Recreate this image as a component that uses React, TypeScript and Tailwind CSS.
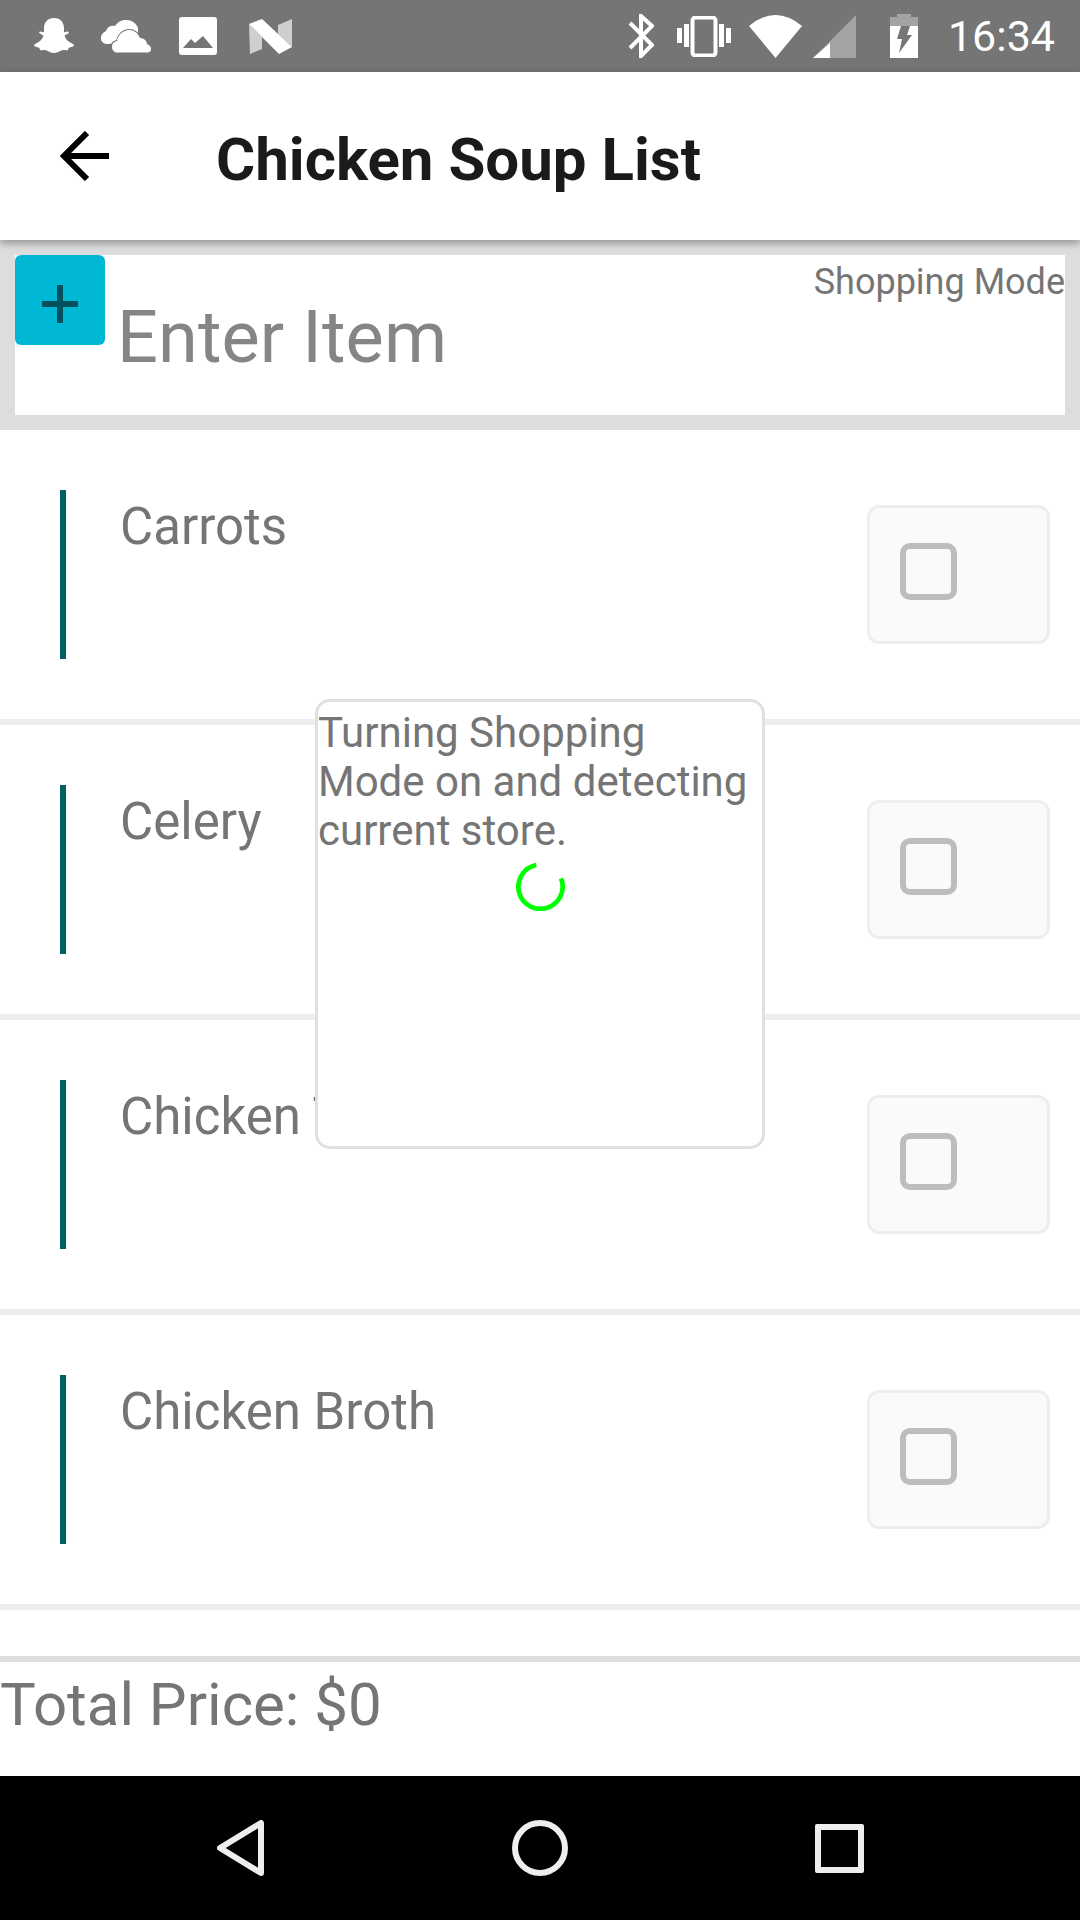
const items = ['Carrots', 'Celery', 'Chicken T', 'Chicken Broth']

function Snapchat() {
  return (
    <svg width="42" height="38" viewBox="0 0 42 40" fill="white" preserveAspectRatio="none">
      <path d="M21 1c6.500 0 10 4.800 10 10.500v4.500l3.800-.8c1.200 0 1.400 1.600.4 2.200l-3.700 2c.8 3.600 3.800 6.700 7.600 8.600 2.500 1.300 2.300 2.800 0 3.400l-3.300.9-1 2.600-4.800-.2c-3 .4-5.600 3.300-9 3.300s-6-2.900-9-3.300l-4.800.2-1-2.600-3.300-.9c-2.300-.6-2.500-2.100 0-3.400 3.800-1.900 6.800-5 7.600-8.600l-3.700-2c-1-.6-.8-2.200.4-2.200l3.800.8v-4.500C11 5.800 14.500 1 21 1z" />
    </svg>
  )
}

function Clouds() {
  return (
    <svg width="50" height="33" viewBox="0 0 50 33" fill="white">
      <path d="M7 24C3 24 0 22 0 18c0-4 3-6 5-7 1-4 5-6 9-5 3-4 6-6 11-6 6 0 10 3 12 8v12z" />
      <path
        d="M16 32.500c-3 0-5-2.500-5-6 0-3 2-5 5-5.500 1-6 6-11 12-11 5 0 9 3 11 8 4 0 7 3 7 6 3 1 4 3 4 5 0 2-1 3.500-4 3.500z"
        stroke="#757575"
        strokeWidth="2"
        paintOrder="stroke"
      />
    </svg>
  )
}

function ImageIcon() {
  return (
    <svg width="38" height="38" viewBox="0 0 38 38">
      <rect width="38" height="38" rx="3" fill="white" />
      <path d="M4 31l8-9 4 4 8-7 10 12z" fill="#757575" />
    </svg>
  )
}

function Nougat() {
  return (
    <svg width="43" height="35" viewBox="0 0 43 35">
      <path d="M0 5l1 30 12-5V18z" fill="#cfcfcf" />
      <path d="M29 6l14-6v28L29 15z" fill="#cfcfcf" />
      <path d="M0 5l13-5 30 28-13 7z" fill="white" />
    </svg>
  )
}

function Bluetooth() {
  return (
    <svg width="26" height="44" viewBox="0 0 26 44" fill="none" stroke="white" strokeWidth="4">
      <path d="M2 9l22 22-11 11V2l11 10L2 34" />
    </svg>
  )
}

function Vibrate() {
  return (
    <svg width="54" height="41" viewBox="0 0 54 41" fill="white">
      <rect x="0" y="12" width="5" height="15" />
      <rect x="7" y="8" width="5" height="23" />
      <rect x="42" y="8" width="5" height="23" />
      <rect x="49" y="12" width="5" height="15" />
      <rect x="15.500" y="1.500" width="23" height="38" rx="3" fill="none" stroke="white" strokeWidth="4" />
    </svg>
  )
}

function Wifi() {
  return (
    <svg width="53" height="43" viewBox="0 0 53 43" fill="white">
      <path d="M26.500 43L0 11Q26.500-11 53 11z" />
    </svg>
  )
}

function Signal() {
  return (
    <svg width="43" height="43" viewBox="0 0 43 43">
      <path d="M43 0v43H0z" fill="#a3a3a3" />
      <path d="M17 28v15H0z" fill="white" />
    </svg>
  )
}

function Battery() {
  return (
    <svg width="28" height="44" viewBox="0 0 28 44">
      <path d="M7 0h14v3h7v9H0V3h7z" fill="#a3a3a3" />
      <path d="M0 12h28v32H0z" fill="white" />
      <path d="M11 12h9l-3 9h5L9 39l3-14H7z" fill="#757575" />
    </svg>
  )
}

function Spinner() {
  return (
    <svg width="49" height="49" viewBox="0 0 52 52" fill="none">
      <path d="M21.500 3.200A23.500 23.500 0 1 0 47.800 17.500" stroke="#00ff00" strokeWidth="5" />
    </svg>
  )
}

function ItemRow({ name }: { name: string }) {
  return (
    <div className="h-[295px] shrink-0 border-b-[6px] border-[#eeeeee] flex items-start pl-[60px] pr-[30px] pt-[60px]">
      <div className="w-[6px] h-[169px] bg-[#006064]" />
      <div className="ml-[54px] flex-1 text-[51px] leading-[60px] text-[#757575] pt-[7px] whitespace-nowrap">{name}</div>
      <div className="mt-[15px] w-[183px] h-[139px] bg-[#fafafa] border-[3px] border-[#eeeeee] rounded-[12px] pl-[30px] pt-[35px]">
        <div className="w-[57px] h-[57px] border-[6px] border-[#bdbdbd] rounded-[10px]" />
      </div>
    </div>
  )
}

export default function App() {
  return (
    <div className="relative w-[1080px] h-[1920px] overflow-hidden bg-white flex flex-col font-['Roboto',sans-serif]">
      <div className="h-[72px] shrink-0 bg-[#757575] flex items-center pl-[33px] pr-[25px]">
        <Snapchat />
        <div className="ml-[26px]"><Clouds /></div>
        <div className="ml-[28px]"><ImageIcon /></div>
        <div className="ml-[32px]"><Nougat /></div>
        <div className="ml-auto flex items-center">
          <Bluetooth />
          <div className="ml-[23px]"><Vibrate /></div>
          <div className="ml-[18px]"><Wifi /></div>
          <div className="ml-[11px]"><Signal /></div>
          <div className="ml-[34px]"><Battery /></div>
          <span className="ml-[30px] text-[43px] leading-none text-white">16:34</span>
        </div>
      </div>

      <div className="h-[168px] shrink-0 bg-white flex items-center pl-[60px] relative z-10 shadow-[0_3px_8px_rgba(0,0,0,0.35)]">
        <svg width="49" height="50" viewBox="0 0 49 50" fill="none" stroke="black" strokeWidth="6">
          <path d="M49 25H4M27 2L4 25l23 23" />
        </svg>
        <span className="ml-[107px] mt-[8px] text-[60px] leading-none font-bold text-[#1a1a1a]">Chicken Soup List</span>
      </div>

      <div className="h-[190px] shrink-0 bg-[#dddddd] p-[15px]">
        <div className="relative h-[160px] bg-white">
          <div className="flex items-start">
            <div className="w-[90px] h-[90px] bg-[#00b8d4] rounded-[6px] flex items-center justify-center pt-[8px]">
              <svg width="36" height="38" viewBox="0 0 36 38" fill="#00505f">
                <path d="M15 0h6v16h15v6H21v16h-6V22H0v-6h15z" />
              </svg>
            </div>
            <span className="ml-[12px] mt-[41px] text-[72px] leading-[84px] tracking-[0.1px] text-[#858585]">Enter Item</span>
          </div>
          <span className="absolute right-0 top-[6px] text-[36px] leading-[42px] text-[#757575]">Shopping Mode</span>
        </div>
      </div>

      <div className="h-[1226px] shrink-0 flex flex-col overflow-hidden">
        {items.map((name) => (
          <ItemRow key={name} name={name} />
        ))}
      </div>

      <div className="h-[120px] shrink-0 border-t-[6px] border-[#dddddd] text-[60px] leading-[70px] pt-[8px] text-[#757575]">
        Total Price: $0
      </div>

      <div className="h-[144px] shrink-0 bg-black flex items-center">
        <div className="ml-[217px]">
          <svg width="47" height="56" viewBox="0 0 47 56" fill="none" stroke="#eeeeee" strokeWidth="6" strokeLinejoin="round">
            <path d="M44 3v50L3 28z" />
          </svg>
        </div>
        <div className="ml-[248px] w-[56px] h-[56px] rounded-full border-[6px] border-[#eeeeee]" />
        <div className="ml-[247px] w-[49px] h-[49px] rounded-[2px] border-[6px] border-[#eeeeee]" />
      </div>

      <div className="absolute left-[315px] top-[699px] w-[450px] h-[450px] z-20 bg-white border-[3px] border-[#e0e0e0] rounded-[15px] pt-[6px] pr-[10px]">
        <p className="text-[42px] leading-[49px] text-[#757575]">Turning Shopping Mode on and detecting current store.</p>
        <div className="flex justify-center mt-[7px] ml-[10px]">
          <Spinner />
        </div>
      </div>
    </div>
  )
}
